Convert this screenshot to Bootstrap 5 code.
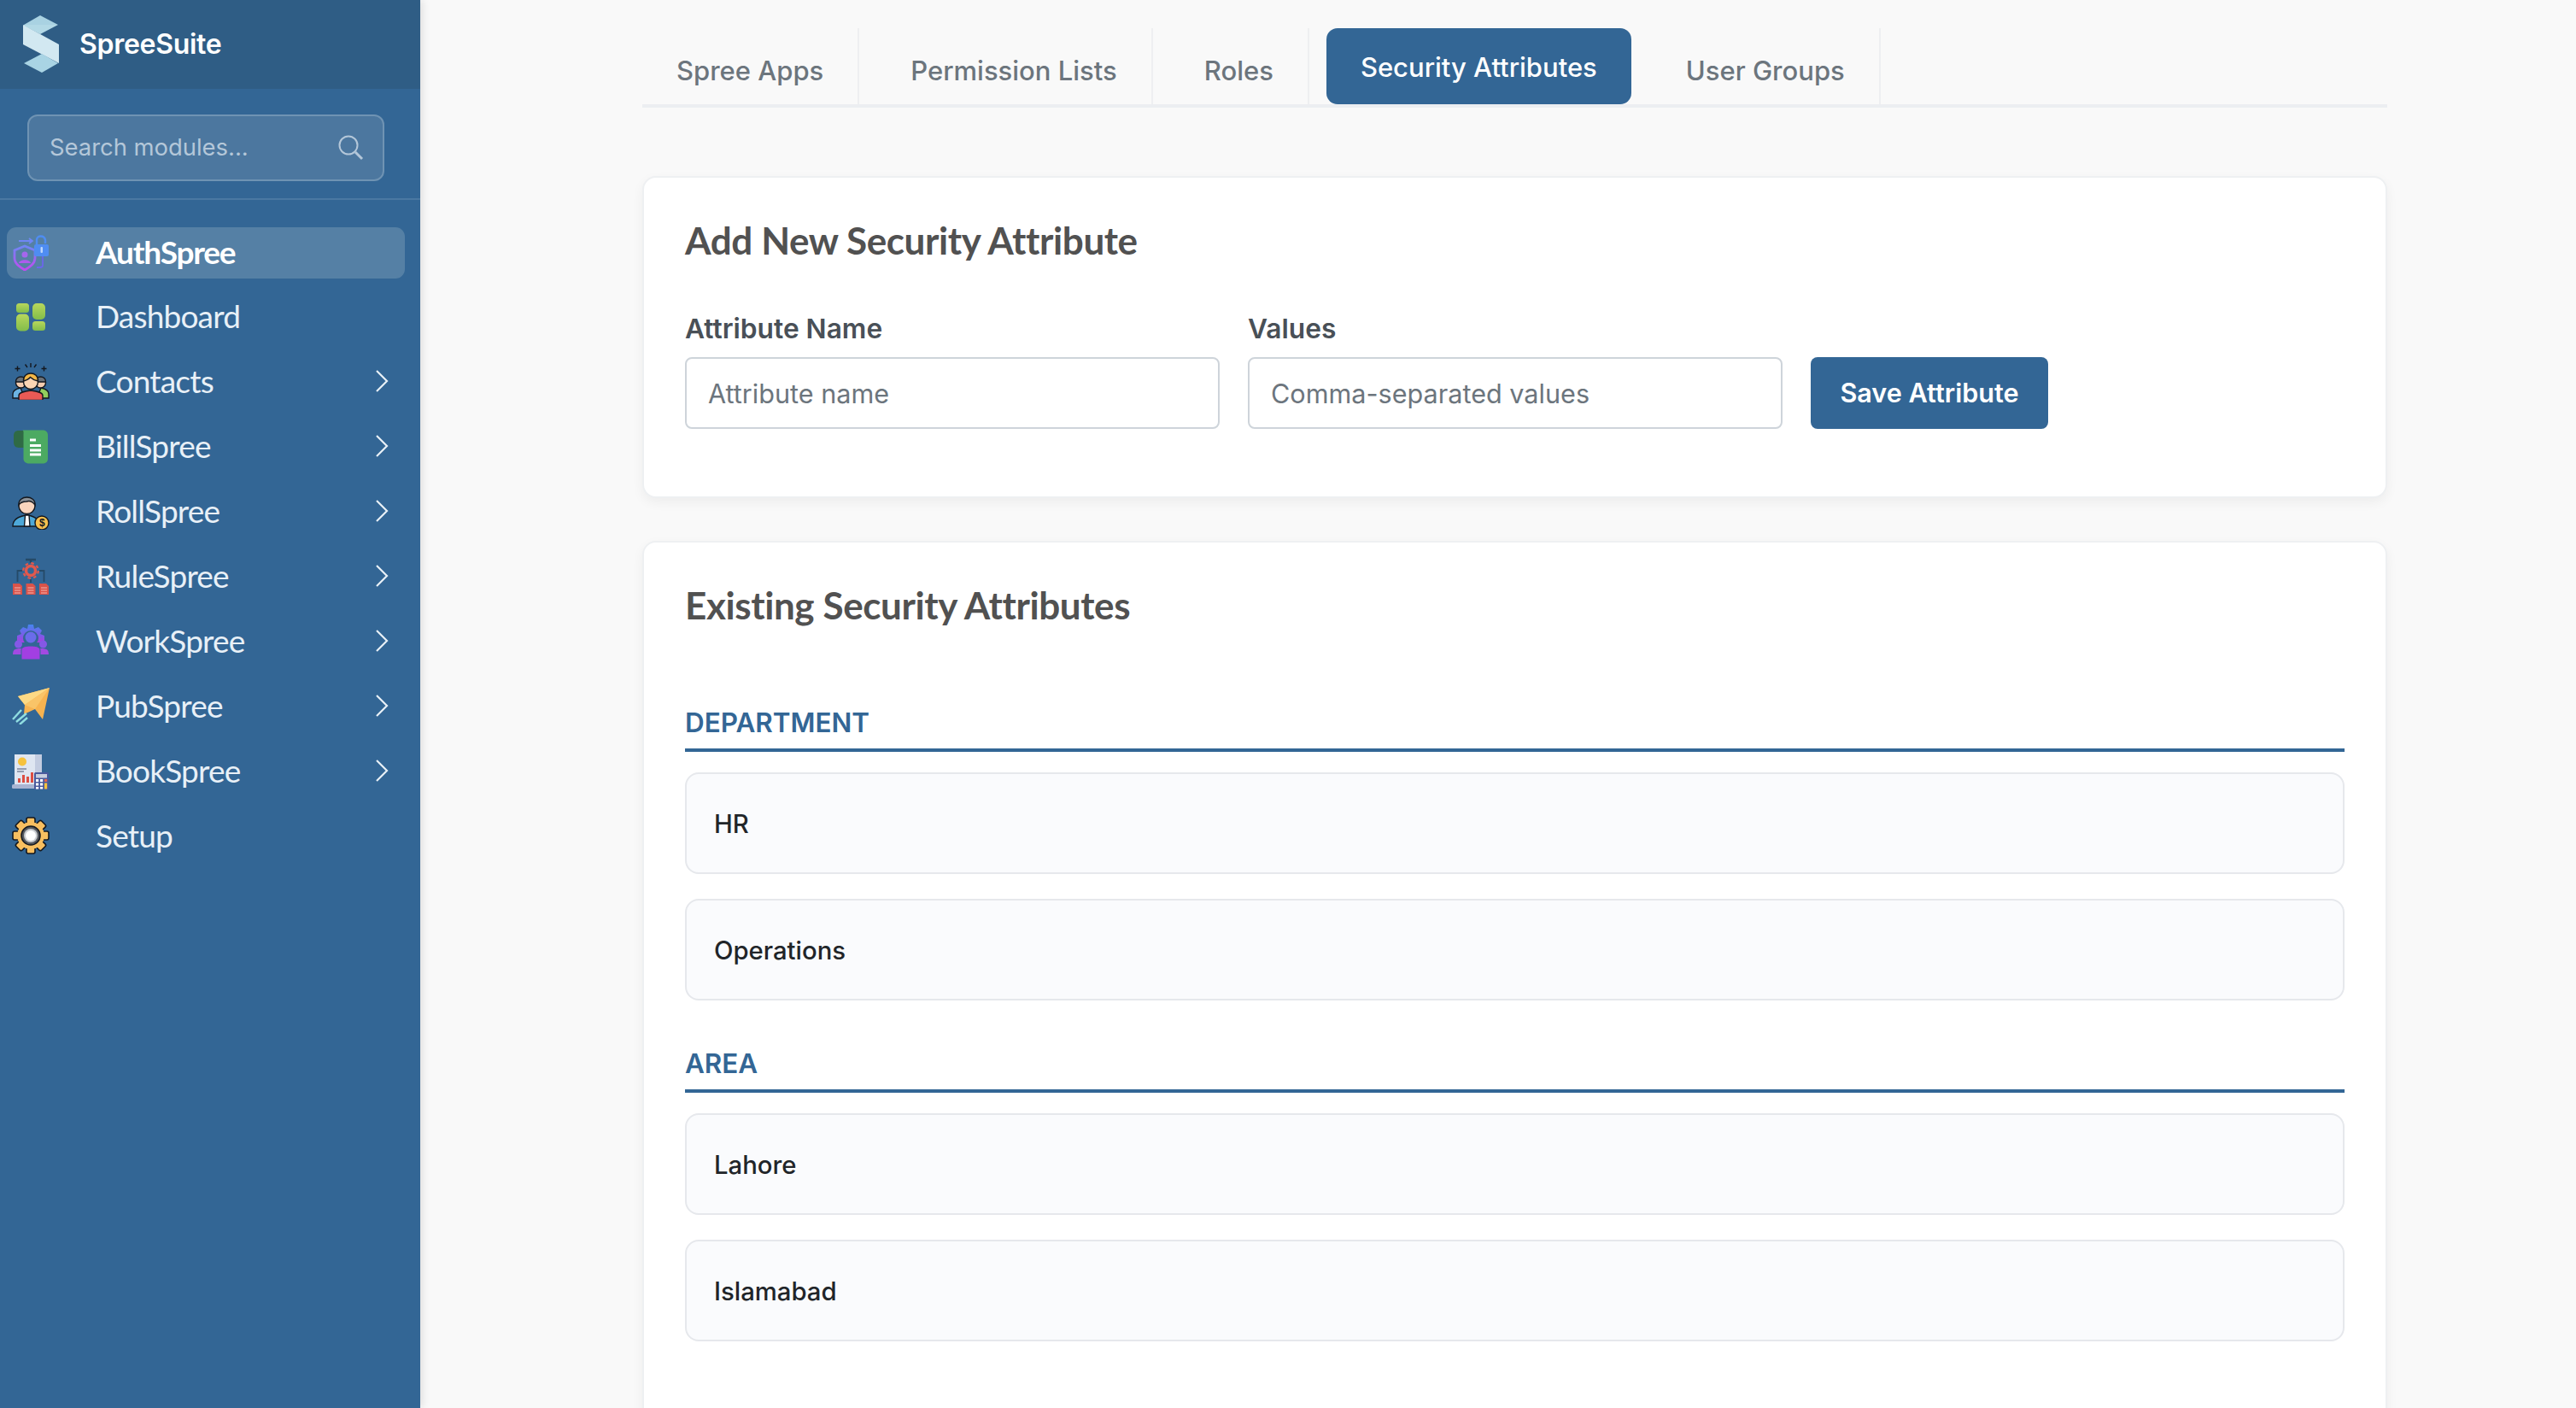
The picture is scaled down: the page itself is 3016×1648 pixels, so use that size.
<!DOCTYPE html>
<html lang="en">
<head>
  <meta charset="UTF-8" />
  <meta name="viewport" content="width=device-width, initial-scale=1.0"/>
  <title>Security Attributes - SpreeSuite</title>
  <link href="https://cdn.jsdelivr.net/npm/bootstrap@5.3.0/dist/css/bootstrap.min.css" rel="stylesheet" />
  <style>
    html, body { height: 100%; }
    body { background: #f9f9f9; font-family: Inter, "Liberation Sans", sans-serif; overflow: hidden; }
    .side-panel { width: 492px; height: 100vh; flex: none; background: #336695; box-shadow: 2px 0 10px rgba(0,0,0,.12); }
    .side-head { height: 104px; background: #2f5d85; padding-left: 27px; gap: 23px; }
    .brand-name { color: #fff; font-size: 32px; font-weight: 600; letter-spacing: -.3px; }
    .search-wrap { padding: 30px 42px 20px 32px; border-bottom: 2px solid #4a78a2; }
    .search-box { height: 78px; border: 2px solid #6f93b3; border-radius: 12px; background: #4c779f; padding: 0 22px 0 24px; }
    .search-box span { color: #b4c7d9; font-size: 27.4px; }
    .module-menu { padding: 32px 18px 0 8px; gap: 15.9px; }
    .module-item { height: 60px; padding: 0 19px 3px 6px; border-radius: 11px; color: #e8f0f7; font-family: Lato, sans-serif; font-size: 37px; letter-spacing: -.8px; line-height: 56px; }
    .module-item.is-on { background: #5580a5; color: #fff; font-weight: 700; letter-spacing: -1.2px; }
    .module-item svg.mod-ico { width: 44px; height: 44px; flex: none; margin-right: 54px; }
    .content-area { padding: 33px 221px 0 260px; min-width: 0; }
    .nav-tabs.tab-strip { border-bottom: 4px solid #eceef1; gap: 20px; margin-bottom: 80px; }
    .tab-strip .nav-link { border: 0; border-right: 2px solid #eeeff1; border-radius: 0; margin: 0; padding: 30px 40px 0; height: 89px; line-height: 39px; font-size: 31px; font-weight: 500; color: #6c757d; background: none; }
    .tab-strip .nav-link.active { border: 0; border-radius: 13px; background: #336695; color: #fff; padding: 26px 40px 0; margin-right: 4px; }
    .panel-card { border: 2px solid #eef0f2; border-radius: 16px; background: #fff; box-shadow: 0 5px 14px rgba(0,0,0,.05); padding: 46px 48px 0; }
    .add-panel { padding-bottom: 79px; margin-bottom: 50px; }
    .list-panel { padding-bottom: 100px; }
    .panel-title { font-family: Lato, sans-serif; font-weight: 700; font-size: 44px; letter-spacing: -.4px; line-height: 54px; color: #515151; margin: 0; }
    .form-line { margin-top: 57px; gap: 33px; }
    .field-label { font-size: 31.7px; font-weight: 600; color: #495057; line-height: 40px; margin-bottom: 13px; }
    .field-box { width: 626px; height: 84px; border: 2px solid #ced4da; border-radius: 8px; font-size: 30.6px; padding: 0 25px; }
    .field-box::placeholder { color: #6c757d; }
    .save-btn { width: 278px; height: 84px; border-radius: 8px; background: #336695; border: 0; color: #fff; font-size: 30.6px; font-weight: 600; padding: 0; }
    .group-name { font-size: 31.4px; font-weight: 600; color: #336695; line-height: 40px; padding-bottom: 10px; border-bottom: 4px solid #336695; margin: 54px 0 24px; }
    .group-name.first-group { margin-top: 91px; }
    .value-row { height: 119px; border: 2px solid #e6e8ec; border-radius: 16px; background: #fafbfd; padding: 2px 0 0 32px; margin-bottom: 29px; font-size: 29.3px; font-weight: 500; color: #212529; }
    .coin-mark { font-family: "Liberation Sans", sans-serif; font-size: 12px; font-weight: 700; fill: #14181f; stroke: none; }
  </style>
</head>
<body>
<div class="d-flex">
  <!-- sidebar -->
  <aside class="side-panel d-flex flex-column">
    <div class="side-head d-flex align-items-center">
      <svg width="43" height="68" viewBox="0 0 43 68">
        <polygon points="20,0 41,11 1,11" fill="#a9d2e2"/>
        <polygon points="1,11 41,11 20,22 1,12" fill="#b3d9e6"/>
        <polygon points="0,11 42,34 42,56 0,34" fill="#d2e8f1"/>
        <polygon points="1,56 22,45 41,56 22,67" fill="#a9d4e4"/>
      </svg>
      <span class="brand-name">SpreeSuite</span>
    </div>
    <div class="search-wrap">
      <div class="search-box d-flex align-items-center justify-content-between">
        <span>Search modules...</span>
        <svg width="30" height="30" viewBox="0 0 30 30" fill="none" stroke="#b4c7d9" stroke-width="2">
          <circle cx="12" cy="12" r="10.5"/><path d="M20 20 L28 28" stroke-width="3"/>
        </svg>
      </div>
    </div>
    <nav class="module-menu d-flex flex-column">
      <a class="module-item is-on d-flex align-items-center text-decoration-none">
        <svg class="mod-ico" viewBox="0 0 44 44" fill="none">
          <defs><linearGradient id="authg" x1="0" y1="0" x2="0" y2="1"><stop offset="0" stop-color="#6f86f5"/><stop offset="1" stop-color="#c04bf0"/></linearGradient></defs>
          <path d="M15 15 L27 20 V29 C27 36 20 40 15 43 C10 40 3 36 3 29 V20 Z" stroke="url(#authg)" stroke-width="2.800"/>
          <circle cx="15" cy="25" r="3.500" fill="#a566ee"/><path d="M8 35 C9 30 21 30 22 35 Z" fill="#ad5cee"/>
          <path d="M8 9 H24 M20 6 L24 9 L20 12" stroke="#6f86f5" stroke-width="1.800"/>
          <rect x="26" y="13" width="17" height="14" rx="2" fill="#4f8df2"/>
          <path d="M29 13 V8 C29 2 38 2 39 8 V12" stroke="#4f8df2" stroke-width="2.400"/>
          <rect x="33.500" y="16" width="2.500" height="7" rx="1" fill="#bcd6fb"/>
          <path d="M36 27 V38 C36 40 34 40 29 40" stroke="#6b66ec" stroke-width="1.800"/>
        </svg>AuthSpree
      </a>
      <a class="module-item d-flex align-items-center text-decoration-none">
        <svg class="mod-ico" viewBox="0 0 44 44">
          <defs><linearGradient id="dashg" x1="0" y1="0" x2="0" y2="1"><stop offset="0" stop-color="#b8d75c"/><stop offset="1" stop-color="#82bd4a"/></linearGradient></defs>
          <rect x="5" y="7" width="15" height="11" rx="3.500" fill="url(#dashg)"/>
          <rect x="5" y="19.500" width="15" height="20" rx="5" fill="url(#dashg)"/>
          <rect x="24" y="7" width="15" height="19" rx="5" fill="url(#dashg)"/>
          <rect x="24" y="28" width="15" height="11" rx="3.500" fill="url(#dashg)"/>
        </svg>Dashboard
      </a>
      <a class="module-item d-flex align-items-center text-decoration-none">
        <svg class="mod-ico" viewBox="0 0 44 44" stroke="#14181f" stroke-width="1.400">
          <path d="M3.500 7.500 H9.500 M6.500 4.500 V10.500 M34.500 7.500 H40.500 M37.500 4.500 V10.500 M22 1 V6 M15.500 2.500 L18 6 M28.500 2.500 L26 6"/>
          <path d="M1 42 V37 C1 33 5 31 10 30 L15 42 Z" fill="#6db4e3"/><path d="M43 42 V37 C43 33 39 31 34 30 L29 42 Z" fill="#93cf5d"/>
          <circle cx="10.500" cy="24" r="6" fill="#f6cdb0"/><path d="M4.500 23 C4 15 17 15 16.500 23 Z" fill="#6b7178"/>
          <circle cx="33.500" cy="24" r="6" fill="#f6cdb0"/><path d="M27.500 23 C27 15 40 15 39.500 23 Z" fill="#6b7178"/>
          <path d="M8 44.500 V39 C8 35 14 34 22 33 C30 34 36 35 36 39 V44.500 Z" fill="#ea5a55"/>
          <circle cx="22" cy="23" r="8.500" fill="#fbd5b5"/><path d="M13.500 22 C12.500 10 31.500 10 30.500 22 C26 21 23 19 21.500 17.500 C19.500 20 17 21 13.500 22 Z" fill="#f3b646"/>
        </svg>Contacts
        <svg class="ms-auto" width="16" height="28" viewBox="0 0 16 28" fill="none" stroke="#e8f0f7" stroke-width="2.200"><path d="M2 2 L14 14 L2 26"/></svg>
      </a>
      <a class="module-item d-flex align-items-center text-decoration-none">
        <svg class="mod-ico" viewBox="0 0 44 44">
          <path d="M8 4 H20 V24 H8 C4 24 2 21 2 18 V10 C2 6 4 4 8 4 Z" fill="#2f6a45"/>
          <path d="M12 3.500 H36 C40 3.500 42 6 42 9 V37 C42 40 40 42.500 36 42.500 H20 C16 42.500 13.500 40 13.500 37 V9 C13.500 6 14 4 12 3.500 Z" fill="#4caa62"/>
          <path d="M21 15 H28 M21 21.500 H34 M21 27 H34 M21 32 H34" stroke="#fff" stroke-width="2.800"/>
        </svg>BillSpree
        <svg class="ms-auto" width="16" height="28" viewBox="0 0 16 28" fill="none" stroke="#e8f0f7" stroke-width="2.200"><path d="M2 2 L14 14 L2 26"/></svg>
      </a>
      <a class="module-item d-flex align-items-center text-decoration-none">
        <svg class="mod-ico" viewBox="0 0 44 44" stroke="#14181f" stroke-width="1.400">
          <path d="M1 40 C1 31 8 28 18 27 C26 28 32 31 33 40 Z" fill="#4ea8d8"/>
          <path d="M15.500 27 H20 L21 40 H14.500 Z" fill="#fff"/>
          <circle cx="17.500" cy="16" r="9.500" fill="#fbd5bd"/>
          <path d="M8 15 C7 3 28 3 27 15 C24 11 20 10 17 11 C13 11 10 12 8 15 Z" fill="#8b9096"/>
          <circle cx="35" cy="36" r="8" fill="#f7c04f"/>
          <text class="coin-mark" x="35" y="40.200" text-anchor="middle">$</text>
        </svg>RollSpree
        <svg class="ms-auto" width="16" height="28" viewBox="0 0 16 28" fill="none" stroke="#e8f0f7" stroke-width="2.200"><path d="M2 2 L14 14 L2 26"/></svg>
      </a>
      <a class="module-item d-flex align-items-center text-decoration-none">
        <svg class="mod-ico" viewBox="0 0 44 44">
          <path d="M16 3 H28 M22 3 V7" stroke="#254a68" stroke-width="2.500" fill="none"/>
          <path d="M12 16 H6.500 V29 M32 16 H37.500 V29 M22 26 V30" stroke="#254a68" stroke-width="1.800" fill="none"/>
          <circle cx="22" cy="16" r="5.500" fill="none" stroke="#e2584c" stroke-width="3.500"/>
          <circle cx="22" cy="16" r="8.800" fill="none" stroke="#e2584c" stroke-width="2.200" stroke-dasharray="3.500 3.410"/>
          <g fill="#d9534a"><path d="M1 31 H9 L12 34 V44 H1 Z"/><path d="M16.500 31 H24.500 L27.500 34 V44 H16.500 Z"/><path d="M32 31 H40 L43 34 V44 H32 Z"/></g>
          <path d="M3 36 H10 M3 39 H10 M3 42 H10 M18.500 36 H25.500 M18.500 39 H25.500 M18.500 42 H25.500 M34 36 H41 M34 39 H41 M34 42 H41" stroke="#f6b8b0" stroke-width="1"/>
        </svg>RuleSpree
        <svg class="ms-auto" width="16" height="28" viewBox="0 0 16 28" fill="none" stroke="#e8f0f7" stroke-width="2.200"><path d="M2 2 L14 14 L2 26"/></svg>
      </a>
      <a class="module-item d-flex align-items-center text-decoration-none">
        <svg class="mod-ico" viewBox="0 0 44 44">
          <defs><linearGradient id="workg" x1="0" y1="0" x2="0" y2="1"><stop offset="0" stop-color="#4585f0"/><stop offset=".6" stop-color="#7b5ce8"/><stop offset="1" stop-color="#a83fe0"/></linearGradient></defs>
          <path d="M19 3 H25 L26 8 L31 6 L35 10 L33 14 L38 16 L38 24 H6 L6 16 L11 14 L9 10 L13 6 L18 8 Z" fill="url(#workg)"/>
          <circle cx="22" cy="19" r="9" fill="#336695"/>
          <circle cx="22" cy="18" r="6.500" fill="#6a6cea"/>
          <circle cx="7.500" cy="26" r="4.500" fill="#8558e6"/><circle cx="36.500" cy="26" r="4.500" fill="#8558e6"/>
          <path d="M1 38 C1 32 4 31 10 31 H34 C40 31 43 32 43 38 Z" fill="#a14ae2"/>
          <path d="M11 44 V33 C11 29 16 28 22 28 C28 28 33 29 33 33 V44 Z" fill="#a23fe2" stroke="#336695" stroke-width="1"/>
        </svg>WorkSpree
        <svg class="ms-auto" width="16" height="28" viewBox="0 0 16 28" fill="none" stroke="#e8f0f7" stroke-width="2.200"><path d="M2 2 L14 14 L2 26"/></svg>
      </a>
      <a class="module-item d-flex align-items-center text-decoration-none">
        <svg class="mod-ico" viewBox="0 0 44 44">
          <polygon points="44,1 7,11 15,21 14,32 27,26 36,38" fill="#f7b350"/>
          <polygon points="44,1 7,11 15,21" fill="#fcd985"/>
          <polygon points="44,1 15,21 27,26" fill="#f9c468"/>
          <path d="M1 38 L11 27 M5 41 L17 31 M9 44 L18 36" stroke="#8fdde0" stroke-width="2.400" fill="none"/>
        </svg>PubSpree
        <svg class="ms-auto" width="16" height="28" viewBox="0 0 16 28" fill="none" stroke="#e8f0f7" stroke-width="2.200"><path d="M2 2 L14 14 L2 26"/></svg>
      </a>
      <a class="module-item d-flex align-items-center text-decoration-none">
        <svg class="mod-ico" viewBox="0 0 44 44">
          <path d="M3 3 H28 L30 6 H35 V38 H3 Z" fill="#dfe6f1"/>
          <rect x="27" y="3" width="8" height="35" fill="#c3cce0"/>
          <rect x="0" y="38" width="31" height="5" rx="1.500" fill="#a9b5d2"/>
          <circle cx="12" cy="11.500" r="5" fill="#f6c23d"/>
          <path d="M6 20 H17 M6 23 H14" stroke="#7d869c" stroke-width="1.300"/>
          <g fill="#dc4f43"><rect x="7" y="31" width="3" height="5"/><rect x="12" y="27" width="3" height="9"/><rect x="17" y="29" width="3" height="7"/><rect x="22" y="24" width="3" height="12"/></g>
          <rect x="26" y="24" width="17" height="21" rx="1.500" fill="#4a5a9c"/>
          <rect x="28" y="26" width="13" height="4.500" fill="#c7cede"/>
          <g fill="#fff"><rect x="28" y="32" width="3.200" height="3"/><rect x="33" y="32" width="3.200" height="3"/><rect x="28" y="36.500" width="3.200" height="3"/><rect x="33" y="36.500" width="3.200" height="3"/><rect x="28" y="41" width="3.200" height="2.500"/><rect x="33" y="41" width="3.200" height="2.500"/></g>
          <rect x="38" y="36.500" width="3.200" height="7" fill="#f6c23d"/><rect x="38" y="32" width="3.200" height="3" fill="#e2654f"/>
        </svg>BookSpree
        <svg class="ms-auto" width="16" height="28" viewBox="0 0 16 28" fill="none" stroke="#e8f0f7" stroke-width="2.200"><path d="M2 2 L14 14 L2 26"/></svg>
      </a>
      <a class="module-item d-flex align-items-center text-decoration-none">
        <svg class="mod-ico" viewBox="0 0 44 44">
          <g fill="#f8bf60" stroke="#14181f" stroke-width="1.600">
            <rect x="17" y="1" width="10" height="12" rx="2"/>
            <rect x="17" y="1" width="10" height="12" rx="2" transform="rotate(45 22 22)"/>
            <rect x="17" y="1" width="10" height="12" rx="2" transform="rotate(90 22 22)"/>
            <rect x="17" y="1" width="10" height="12" rx="2" transform="rotate(135 22 22)"/>
            <rect x="17" y="1" width="10" height="12" rx="2" transform="rotate(180 22 22)"/>
            <rect x="17" y="1" width="10" height="12" rx="2" transform="rotate(225 22 22)"/>
            <rect x="17" y="1" width="10" height="12" rx="2" transform="rotate(270 22 22)"/>
            <rect x="17" y="1" width="10" height="12" rx="2" transform="rotate(315 22 22)"/>
          </g>
          <circle cx="22" cy="22" r="15.500" fill="#f8bf60" stroke="#f8bf60"/>
          <circle cx="22" cy="22" r="11" fill="#55595f" stroke="#14181f" stroke-width="1.500"/>
          <circle cx="22" cy="22" r="8" fill="#c9ccd0"/>
          <circle cx="22" cy="22" r="6" fill="#fff"/>
        </svg>Setup
      </a>
    </nav>
  </aside>

  <!-- main -->
  <main class="content-area flex-grow-1">
    <ul class="nav nav-tabs tab-strip">
      <li class="nav-item"><a class="nav-link" href="#">Spree Apps</a></li>
      <li class="nav-item"><a class="nav-link" href="#">Permission Lists</a></li>
      <li class="nav-item"><a class="nav-link" href="#">Roles</a></li>
      <li class="nav-item"><a class="nav-link active" href="#">Security Attributes</a></li>
      <li class="nav-item"><a class="nav-link" href="#">User Groups</a></li>
    </ul>

    <section class="panel-card add-panel">
      <h2 class="panel-title">Add New Security Attribute</h2>
      <form class="d-flex align-items-end form-line">
        <div>
          <label class="field-label d-block">Attribute Name</label>
          <input type="text" class="form-control field-box" placeholder="Attribute name" />
        </div>
        <div>
          <label class="field-label d-block">Values</label>
          <input type="text" class="form-control field-box" placeholder="Comma-separated values" />
        </div>
        <button type="button" class="btn save-btn">Save Attribute</button>
      </form>
    </section>

    <section class="panel-card list-panel">
      <h2 class="panel-title">Existing Security Attributes</h2>
      <h3 class="group-name first-group">DEPARTMENT</h3>
      <div class="value-row d-flex align-items-center">HR</div>
      <div class="value-row d-flex align-items-center">Operations</div>
      <h3 class="group-name">AREA</h3>
      <div class="value-row d-flex align-items-center">Lahore</div>
      <div class="value-row d-flex align-items-center">Islamabad</div>
    </section>
  </main>
</div>
</body>
</html>
